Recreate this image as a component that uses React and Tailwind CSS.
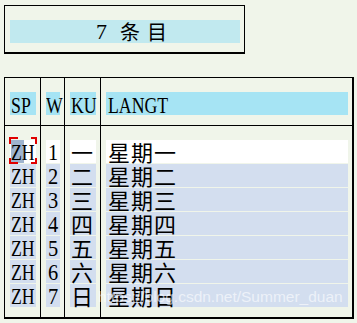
import React from "react";

const rows = [
  ["1", "一", "星期一"],
  ["2", "二", "星期二"],
  ["3", "三", "星期三"],
  ["4", "四", "星期四"],
  ["5", "五", "星期五"],
  ["6", "六", "星期六"],
  ["7", "日", "星期日"],
];

const latin = { fontFamily: '"Liberation Serif", "Noto Sans CJK SC", serif' };
const cjk = { fontFamily: '"Noto Sans CJK SC", "Liberation Serif", serif' };

function Narrow({ children, className = "" }) {
  return (
    <span style={latin} className={`inline-block origin-left scale-x-[0.74] whitespace-nowrap text-[24px] ${className}`}>
      {children}
    </span>
  );
}

export default function App() {
  return (
    <div className="relative w-[357px] h-[323px] bg-[#f0f5ea] pt-[5px] pl-[4px] overflow-hidden text-black">
      {/* title box */}
      <div className="w-[241px] h-[49px] border border-black border-b-2 pl-[5px] pt-[14px]">
        <div className="w-[230px] h-[23px] bg-[#c1e9ef] flex items-center pl-[86px] leading-[23px]">
          <span style={latin} className="text-[22px]">7</span>
          <span style={cjk} className="text-[20px] ml-[13px]">条</span>
          <span style={cjk} className="text-[20px] ml-[7px]">目</span>
        </div>
      </div>

      {/* table */}
      <div className="mt-[23px] w-[350px] border border-black border-b-2 border-r-2">
        {/* header */}
        <div className="flex h-[48px] border-b border-black">
          <div className="w-[36px] border-r border-black pl-[5px] pt-[14px]">
            <div className="w-[26px] h-[23px] bg-[#a6e4f4] leading-[26px] pl-[1px] overflow-visible">
              <Narrow className="leading-[26px]">SP</Narrow>
            </div>
          </div>
          <div className="w-[24px] border-r border-black pl-[5px] pt-[14px]">
            <div className="w-[14px] h-[23px] bg-[#a6e4f4] leading-[26px]">
              <Narrow className="leading-[26px] scale-x-[0.62]">W</Narrow>
            </div>
          </div>
          <div className="w-[36px] border-r border-black pl-[5px] pt-[14px]">
            <div className="w-[26px] h-[23px] bg-[#a6e4f4] leading-[26px] pl-[1px]">
              <Narrow className="leading-[26px] scale-x-[0.68]">KU</Narrow>
            </div>
          </div>
          <div className="flex-1 pl-[5px] pt-[14px]">
            <div className="w-[242px] h-[23px] bg-[#a6e4f4] leading-[26px] pl-[2px]">
              <Narrow className="leading-[26px]">LANGT</Narrow>
            </div>
          </div>
        </div>

        {/* body */}
        <div className="flex h-[191px]">
          <div className="w-[36px] border-r border-black pl-[5px] pt-[14px] flex flex-col gap-[1px]">
            {rows.map((r, i) => (
              <div key={i} className={`relative w-[26px] h-[23px] leading-[24px] pl-[1px] ${i === 0 ? "bg-white" : "bg-[#d3deef]"}`}>
                {i === 0 && <div className="absolute left-[1px] top-0 w-[13px] h-[23px] bg-[#9fb4cf]" />}
                <Narrow className="relative leading-[24px]">ZH</Narrow>
                {i === 0 && (
                  <>
                    <div className="absolute left-[-1px] top-[-3px] w-[9px] h-[7px] border-l-2 border-t-2 border-[#e00000]" />
                    <div className="absolute right-[-1px] top-[-3px] w-[6px] h-[7px] border-r-2 border-t-2 border-[#e00000]" />
                    <div className="absolute left-[-1px] bottom-[-1px] w-[9px] h-[6px] border-l-2 border-b-2 border-[#e00000]" />
                    <div className="absolute right-[-1px] bottom-[-1px] w-[6px] h-[6px] border-r-2 border-b-2 border-[#e00000]" />
                  </>
                )}
              </div>
            ))}
          </div>
          <div className="w-[24px] border-r border-black pl-[5px] pt-[14px] flex flex-col gap-[1px]">
            {rows.map((r, i) => (
              <div key={i} className={`w-[14px] h-[23px] leading-[24px] pl-[2px] ${i === 0 ? "bg-white" : "bg-[#d3deef]"}`}>
                <Narrow className="leading-[24px] scale-x-[0.85]">{r[0]}</Narrow>
              </div>
            ))}
          </div>
          <div className="w-[36px] border-r border-black pl-[5px] pt-[14px] flex flex-col gap-[1px]">
            {rows.map((r, i) => (
              <div key={i} style={cjk} className={`w-[26px] h-[23px] text-[22px] leading-[23px] pl-[1px] ${i === 0 ? "bg-white" : "bg-[#d3deef]"}`}>{r[1]}</div>
            ))}
          </div>
          <div className="flex-1 pl-[5px] pt-[14px] flex flex-col gap-[1px]">
            {rows.map((r, i) => (
              <div key={i} style={cjk} className={`w-[242px] h-[23px] text-[22px] leading-[23px] tracking-[1px] pl-[2px] ${i === 0 ? "bg-white" : "bg-[#d3deef]"}`}>{r[2]}</div>
            ))}
          </div>
        </div>
      </div>

      {/* watermark */}
      <div
        style={{ fontFamily: '"Liberation Sans", Arial, sans-serif' }}
        className="absolute left-[98px] top-[287px] text-[15.5px] leading-[20px] text-white/60 whitespace-nowrap pointer-events-none"
      >
        https://blog.csdn.net/Summer_duan
      </div>
    </div>
  );
}
